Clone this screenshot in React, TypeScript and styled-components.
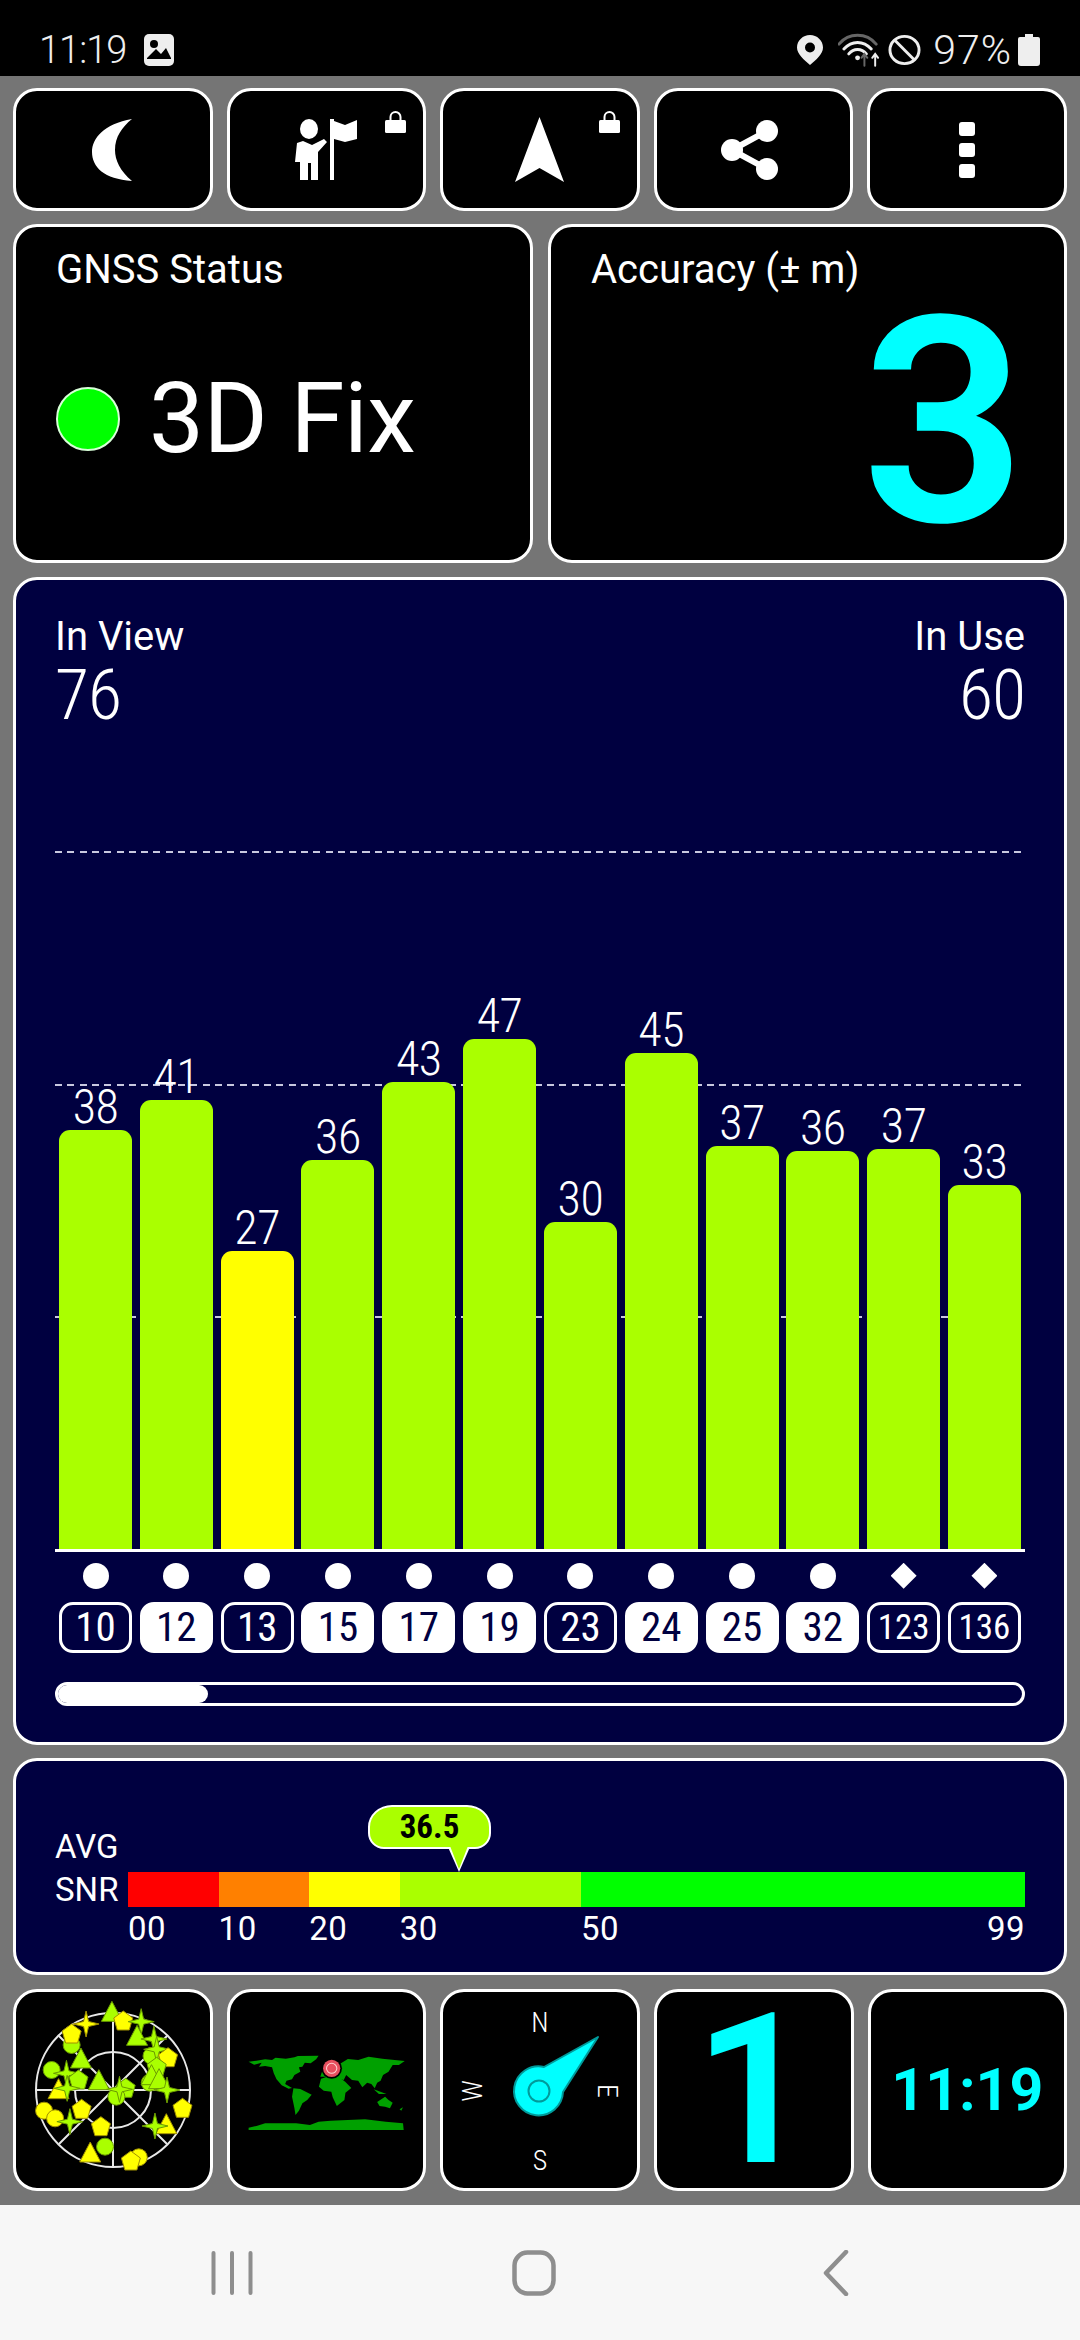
import React from "react";
import styled, { createGlobalStyle } from "styled-components";

const ROBOTO = `"Roboto", "Liberation Sans", sans-serif`;
const LIME = "#aaff00";
const YELLOW = "#ffff00";
const CYAN = "#00ffff";
const NAVY = "#000040";

const GlobalStyle = createGlobalStyle`
  html, body {
    margin: 0;
    padding: 0;
    background: #757575;
  }
  * {
    box-sizing: border-box;
  }
`;

const Screen = styled.div`
  width: 1080px;
  height: 2340px;
  display: flex;
  flex-direction: column;
  background: #757575;
  overflow: hidden;
`;

const StatusBar = styled.div`
  height: 76px;
  flex: none;
  background: #000;
  color: #eee;
  display: flex;
  align-items: center;
  justify-content: space-between;
  padding: 24px 40px 0 39px;
  font-family: ${ROBOTO};
  font-weight: 300;
`;

const StatusGroup = styled.div`
  display: flex;
  align-items: center;
`;

const StatusText = styled.span<{ $size: number; $spacing: number; $left?: number }>`
  font-size: ${(p) => p.$size}px;
  letter-spacing: ${(p) => p.$spacing}px;
  margin-left: ${(p) => p.$left ?? 0}px;
  line-height: 40px;
`;

const StatusIcon = styled.svg<{ $left: number }>`
  margin-left: ${(p) => p.$left}px;
`;

const Main = styled.div`
  flex: 1;
  display: grid;
  grid-template-rows: 123px 339px 1168px 217px 202px;
  row-gap: 13.4px;
  padding: 12px 13px 0;
`;

const ButtonRow = styled.div`
  display: grid;
  grid-template-columns: repeat(5, 1fr);
  column-gap: 14px;
`;

const Tile = styled.div`
  position: relative;
  display: flex;
  align-items: center;
  justify-content: center;
  background: #000;
  border: 3px solid #fff;
  border-radius: 24px;
`;

const TileIcon = styled.svg<{ $shift: number }>`
  margin-right: ${(p) => p.$shift}px;
`;

const LockBadge = styled.svg`
  position: absolute;
  top: 20px;
  right: 17px;
`;

const InfoRow = styled.div`
  display: grid;
  grid-template-columns: 520px 519px;
  column-gap: 15px;
`;

const InfoCard = styled.div`
  position: relative;
  background: #000;
  border: 3px solid #fff;
  border-radius: 24px;
  padding: 20px 38px 0 40px;
  display: flex;
  flex-direction: column;
`;

const CardTitle = styled.div`
  font-family: ${ROBOTO};
  font-stretch: 93%;
  font-size: 40px;
  line-height: 46px;
  color: #fff;
`;

const FixRow = styled.div`
  display: flex;
  align-items: center;
  gap: 29px;
  margin-top: 71px;
`;

const FixDot = styled.div`
  width: 64px;
  height: 64px;
  border-radius: 50%;
  background: #00ff00;
  border: 2px solid #d8ffd8;
`;

const FixText = styled.div`
  font-family: ${ROBOTO};
  font-size: 98px;
  line-height: 110px;
  font-weight: 400;
  letter-spacing: -0.7px;
  color: #fff;
`;

const AccuracyValue = styled.div`
  font-family: ${ROBOTO};
  font-size: 288px;
  font-weight: 600;
  line-height: 260px;
  color: ${CYAN};
  text-align: right;
  margin-top: 0;
`;

const ChartPanel = styled.div`
  background: ${NAVY};
  border: 3px solid #fff;
  border-radius: 24px;
  padding: 34px 39px 36px;
  display: flex;
  flex-direction: column;
`;

const ChartHeader = styled.div`
  display: flex;
  justify-content: space-between;
  color: #fff;
  font-family: ${ROBOTO};
`;

const HeaderBlock = styled.div<{ $right?: boolean }>`
  text-align: ${(p) => (p.$right ? "right" : "left")};
`;

const HeaderLabel = styled.div`
  font-size: 40px;
  font-stretch: 97%;
  line-height: 46px;
`;

const HeaderValue = styled.div`
  font-size: 70px;
  font-weight: 350;
  font-stretch: 75%;
  letter-spacing: -1px;
  line-height: 70px;
`;

const Chart = styled.div`
  position: relative;
  flex: 1;
  display: flex;
  align-items: flex-end;
  gap: 7.8px;
  padding: 0 4px;
  border-bottom: 3px solid #fff;
`;

const GridLine = styled.div<{ $bottom: number }>`
  position: absolute;
  left: 0;
  right: 0;
  bottom: ${(p) => p.$bottom}px;
  height: 2px;
  background: repeating-linear-gradient(to right, #c8c8e0 0 7px, transparent 7px 12.3px);
`;

const BarColumn = styled.div`
  position: relative;
  flex: 1;
  display: flex;
  flex-direction: column;
  align-items: center;
`;

const BarValue = styled.div`
  font-family: ${ROBOTO};
  font-stretch: 75%;
  font-weight: 350;
  letter-spacing: -0.5px;
  font-size: 48px;
  line-height: 46px;
  color: #fff;
`;

const Bar = styled.div<{ $color: string }>`
  width: 100%;
  background: ${(p) => p.$color};
  border-radius: 11px 11px 0 0;
`;

const SlotRow = styled.div`
  display: flex;
  gap: 7.8px;
  padding: 0 4px;
`;

const DotRow = styled(SlotRow)`
  margin-top: 11px;
`;

const ChipRow = styled(SlotRow)`
  margin-top: 13px;
`;

const DotSlot = styled.div`
  flex: 1;
  display: flex;
  justify-content: center;
`;

const Marker = styled.div<{ $diamond: boolean }>`
  width: 26px;
  height: 26px;
  background: #fff;
  border-radius: ${(p) => (p.$diamond ? "0" : "50%")};
  clip-path: ${(p) => (p.$diamond ? "polygon(50% 0, 100% 50%, 50% 100%, 0 50%)" : "none")};
`;

const Chip = styled.div<{ $used: boolean; $small: boolean }>`
  flex: 1;
  height: 51px;
  display: flex;
  align-items: center;
  justify-content: center;
  border: 3px solid #fff;
  border-radius: 14px;
  font-family: ${ROBOTO};
  font-stretch: 75%;
  font-size: ${(p) => (p.$small ? 35 : 41)}px;
  background: ${(p) => (p.$used ? "#fff" : "transparent")};
  color: ${(p) => (p.$used ? NAVY : "#fff")};
`;

const ScrollTrack = styled.div`
  margin-top: 29px;
  height: 24px;
  border: 3px solid #fff;
  border-radius: 12px;
  overflow: hidden;
`;

const ScrollThumb = styled.div`
  width: 150px;
  height: 100%;
  background: #fff;
  border-radius: 0 12px 12px 0;
`;

const SnrPanel = styled.div`
  position: relative;
  background: ${NAVY};
  border: 3px solid #fff;
  border-radius: 24px;
  padding: 70px 39px 0;
  display: grid;
  grid-template-columns: 73px 1fr;
  grid-template-rows: 41px 35px auto;
  color: #fff;
  font-family: ${ROBOTO};
`;

const SnrLabel = styled.div<{ $lift: number }>`
  font-size: 33px;
  line-height: 35px;
  align-self: end;
  margin-bottom: ${(p) => p.$lift}px;
`;

const SnrTrack = styled.div`
  position: relative;
  display: flex;
  height: 35px;
`;

const SnrSegment = styled.div<{ $color: string; $grow: number }>`
  flex: ${(p) => p.$grow} 0 0;
  background: ${(p) => p.$color};
`;

const SnrTicks = styled.div`
  grid-column: 2;
  display: flex;
  margin-top: 4px;
  font-size: 33px;
  letter-spacing: 0.5px;
  line-height: 36px;
`;

const SnrTick = styled.div<{ $grow: number }>`
  flex: ${(p) => p.$grow} 0 0;
  display: flex;
  justify-content: space-between;
`;

const Bubble = styled.div`
  position: absolute;
  left: 240px;
  bottom: 58px;
  width: 123px;
  height: 44px;
  background: ${LIME};
  border: 2px solid #fff;
  border-radius: 24px 24px 16px 16px / 22px 22px 16px 16px;
  color: #000;
  font-size: 33px;
  font-stretch: 85%;
  font-weight: 700;
  line-height: 40px;
  text-align: center;
  &::before {
    content: "";
    position: absolute;
    left: 78px;
    top: 40px;
    border-left: 11px solid transparent;
    border-right: 11px solid transparent;
    border-top: 25px solid #fff;
  }
  &::after {
    content: "";
    position: absolute;
    left: 80px;
    top: 39px;
    border-left: 9px solid transparent;
    border-right: 9px solid transparent;
    border-top: 23px solid ${LIME};
  }
`;

const ClockText = styled.div`
  font-family: ${ROBOTO};
  font-weight: 700;
  font-size: 59px;
  color: ${CYAN};
`;

const BigDigit = styled.div`
  font-family: ${ROBOTO};
  font-weight: 600;
  font-size: 210px;
  line-height: 190px;
  color: ${CYAN};
`;

const NavBar = styled.div`
  height: 135px;
  flex: none;
  background: #f7f7f7;
  display: grid;
  grid-template-columns: repeat(3, 302px);
  align-items: center;
  justify-items: center;
  padding-left: 81px;
`;

const bars = [
  { id: 10, snr: 38, h: 419, used: false, diamond: false },
  { id: 12, snr: 41, h: 449, used: true, diamond: false },
  { id: 13, snr: 27, h: 298, used: false, diamond: false, weak: true },
  { id: 15, snr: 36, h: 389, used: true, diamond: false },
  { id: 17, snr: 43, h: 467, used: true, diamond: false },
  { id: 19, snr: 47, h: 510, used: true, diamond: false },
  { id: 23, snr: 30, h: 327, used: false, diamond: false },
  { id: 24, snr: 45, h: 496, used: true, diamond: false },
  { id: 25, snr: 37, h: 403, used: true, diamond: false },
  { id: 32, snr: 36, h: 398, used: true, diamond: false },
  { id: 123, snr: 37, h: 400, used: false, diamond: true },
  { id: 136, snr: 33, h: 364, used: false, diamond: true }
];

const segments = [
  { color: "#ff0000", grow: 10 },
  { color: "#ff8000", grow: 10 },
  { color: YELLOW, grow: 10 },
  { color: LIME, grow: 20 },
  { color: "#00ff00", grow: 49 }
];

// x, y read off the zoomed crop of the radar tile
type SatKind = "c" | "t" | "s" | "p";
const sats: [SatKind, number, number, string][] = [
  ["t", 325, 160, LIME],
  ["p", 358, 183, YELLOW],
  ["s", 250, 192, YELLOW],
  ["s", 410, 185, LIME],
  ["c", 208, 255, LIME],
  ["p", 208, 222, YELLOW],
  ["t", 398, 232, LIME],
  ["s", 447, 237, LIME],
  ["c", 440, 288, LIME],
  ["s", 455, 268, LIME],
  ["p", 488, 293, YELLOW],
  ["p", 455, 322, LIME],
  ["t", 235, 300, LIME],
  ["c", 150, 330, LIME],
  ["s", 193, 340, LIME],
  ["t", 170, 392, YELLOW],
  ["p", 228, 360, LIME],
  ["t", 287, 365, LIME],
  ["c", 435, 368, LIME],
  ["t", 440, 350, LIME],
  ["t", 462, 362, LIME],
  ["s", 485, 390, LIME],
  ["s", 195, 385, LIME],
  ["p", 365, 385, LIME],
  ["c", 338, 410, LIME],
  ["s", 347, 388, LIME],
  ["p", 237, 448, YELLOW],
  ["c", 128, 452, YELLOW],
  ["c", 160, 475, YELLOW],
  ["s", 203, 485, LIME],
  ["p", 530, 445, YELLOW],
  ["t", 483, 497, YELLOW],
  ["s", 450, 498, LIME],
  ["p", 293, 500, YELLOW],
  ["c", 305, 560, LIME],
  ["t", 262, 582, YELLOW],
  ["c", 403, 592, YELLOW],
  ["p", 380, 603, YELLOW]
];

const polyPoints = (kind: SatKind) => {
  if (kind === "t") return "0,-12 10.5,8 -10.5,8";
  if (kind === "p") return "0,-10 9.5,-3 6,9 -6,9 -9.5,-3";
  return "0,-13 2.5,-2.5 13,0 2.5,2.5 0,13 -2.5,2.5 -13,0 -2.5,-2.5";
};

const Radar = () => (
  <svg width="194" height="196" viewBox="0 0 194 196">
    <g fill="none" stroke="#e8e8e8" strokeWidth="2">
      <circle cx="97" cy="98" r="77" />
      <circle cx="97" cy="98" r="38" />
      <path d="M20 98H174M97 21V175M43 152L151 44M43 44L151 152" />
    </g>
    {sats.map(([kind, zx, zy, color], i) => {
      const x = zx / 2.904 - 16;
      const y = zy / 3 - 32;
      const stroke = color === YELLOW ? "#a09000" : "#6a9a00";
      return kind === "c" ? (
        <circle key={i} cx={x} cy={y} r="8.5" fill={color} stroke={stroke} strokeWidth="1" />
      ) : (
        <polygon
          key={i}
          points={polyPoints(kind)}
          transform={`translate(${x} ${y})`}
          fill={color}
          stroke={stroke}
          strokeWidth="1"
        />
      );
    })}
  </svg>
);

const WorldMap = () => (
  <svg width="193" height="196" viewBox="668 96 560 588" preserveAspectRatio="none">
    <g fill="#00a000">
      <polygon points="722,305 745,302 770,298 790,300 800,293 830,296 855,292 865,288 925,287 918,298 902,310 885,308 878,320 868,322 872,335 855,345 848,358 832,362 828,372 848,384 838,386 818,376 803,358 795,340 790,322 770,318 752,320 760,308 738,314" />
      <polygon points="852,385 872,387 905,404 892,420 878,430 868,452 858,465 855,445 848,410" />
      <polygon points="932,356 950,350 985,352 1003,366 1020,384 1003,398 1000,420 978,438 966,412 962,395 940,392 926,380" />
      <polygon points="930,350 935,335 948,325 990,310 1010,297 1040,300 1070,290 1110,296 1175,303 1158,315 1140,315 1128,335 1112,345 1105,362 1095,368 1088,385 1078,372 1066,368 1052,382 1040,362 1022,360 1005,345 998,360 965,350" />
      <polygon points="1095,426 1118,410 1128,420 1140,428 1132,445 1118,440 1102,438" />
      <polygon points="1085,388 1122,402 1100,402" />
      <polygon points="1160,448 1170,442 1165,452" />
      <polygon points="722,503 745,498 770,490 815,490 860,490 900,495 925,485 960,482 1010,480 1060,478 1120,485 1170,490 1172,510 722,510" />
    </g>
    <ellipse cx="963" cy="325" rx="30" ry="31" fill="#000" />
    <ellipse cx="963" cy="325" rx="25" ry="26" fill="#e8505f" />
    <ellipse cx="963" cy="325" rx="15" ry="15" fill="none" stroke="#ffd0d0" strokeWidth="3" />
  </svg>
);

const CompassLabels = styled.g`
  font-family: ${ROBOTO};
  font-stretch: 75%;
  font-weight: 300;
  font-size: 28px;
  fill: #fff;
  text-anchor: middle;
`;

const Compass = () => (
  <svg width="194" height="196" viewBox="0 0 194 196">
    <CompassLabels>
      <text x="97" y="40">N</text>
      <text x="97" y="178">S</text>
      <text transform="translate(29 99) rotate(-90)" y="10">W</text>
      <text transform="translate(165 99) rotate(90)" y="10">E</text>
    </CompassLabels>
    <path
      d="M155 45L101 75A24.5 24.5 0 1 0 120 100Z"
      fill={CYAN}
      stroke="#009a9a"
      strokeWidth="2"
      strokeLinejoin="round"
    />
    <circle cx="96" cy="99" r="10.5" fill="none" stroke="#009a9a" strokeWidth="2" />
  </svg>
);

const Lock = () => (
  <LockBadge width="21" height="22" viewBox="0 0 21 22">
    <path d="M5.5 10V6a5 5 0 0 1 10 0v4" fill="none" stroke="#fff" strokeWidth="2" />
    <rect x="0" y="9" width="21" height="13" rx="1.5" fill="#fff" />
  </LockBadge>
);

const App = () => (
  <Screen>
    <GlobalStyle />
    <StatusBar>
      <StatusGroup>
        <StatusText $size={38} $spacing={-1}>11:19</StatusText>
        <StatusIcon $left={18} width="30" height="32" viewBox="0 0 30 32">
          <rect width="30" height="32" rx="5" fill="#eee" />
          <circle cx="10" cy="10" r="4" fill="#000" />
          <path d="M3 24L12 15L17 20L22 14L27 24V25H3Z" fill="#000" />
        </StatusIcon>
      </StatusGroup>
      <StatusGroup>
        <StatusIcon $left={0} width="26" height="30" viewBox="0 0 26 30">
          <path
            fillRule="evenodd"
            d="M13 0C6 0 0 5.5 0 12.5C0 19 7 25 13 30C19 25 26 19 26 12.5C26 5.500 20 0 13 0ZM13 7.500A5 5 0 1 1 13 17.500A5 5 0 0 1 13 7.500Z"
            fill="#eee"
          />
        </StatusIcon>
        <StatusIcon $left={15} width="45" height="34" viewBox="0 0 46 34">
          <g fill="none" strokeWidth="3" strokeLinecap="round">
            <path d="M1 11C11 -1 29 -1 39 11" stroke="#666" />
            <path d="M6 16C14 7 26 7 34 16" stroke="#eee" />
            <path d="M11 21C16 15 24 15 29 21" stroke="#eee" />
            <path d="M27 33V21M24 25L27 21L30 25" stroke="#666" strokeWidth="2" />
            <path d="M38 33V21M35 25L38 21L41 25" stroke="#eee" strokeWidth="2" />
          </g>
          <circle cx="20" cy="25" r="2.500" fill="#eee" />
        </StatusIcon>
        <StatusIcon $left={5} width="33" height="32" viewBox="0 0 34 32">
          <ellipse cx="17" cy="16" rx="15" ry="14" fill="none" stroke="#eee" strokeWidth="3" />
          <path d="M7 6L27 26" stroke="#eee" strokeWidth="3" />
        </StatusIcon>
        <StatusText $size={41} $spacing={1} $left={12}>97%</StatusText>
        <StatusIcon $left={6} width="22" height="32" viewBox="0 0 22 32">
          <path d="M7 0H15V3H20A2 2 0 0 1 22 5V29A3 3 0 0 1 19 32H3A3 3 0 0 1 0 29V5A2 2 0 0 1 2 3H7Z" fill="#eee" />
        </StatusIcon>
      </StatusGroup>
    </StatusBar>

    <Main>
      <ButtonRow>
        <Tile>
          <TileIcon $shift={2} width="40" height="62" viewBox="0 0 40 62">
            <path d="M40 0C12 5 0 19 0 33C0 48 12 60 40 62C28 52 23 41 23 31C23 18 30 8 40 0Z" fill="#fff" />
          </TileIcon>
        </Tile>
        <Tile>
          <TileIcon $shift={0} width="62" height="62" viewBox="0 0 62 62">
            <ellipse cx="14" cy="10" rx="9" ry="10" fill="#fff" />
            <path d="M2 24L8 22L17 26L29 20L32 23L23 33V61H16V44H13V61H5V43H0Z" fill="#fff" />
            <rect x="35" y="0" width="4" height="61" fill="#fff" />
            <path d="M39 2L50 6L62 1V20L50 23L39 20Z" fill="#fff" />
          </TileIcon>
          <Lock />
        </Tile>
        <Tile>
          <TileIcon $shift={0} width="49" height="65" viewBox="0 0 49 65">
            <path d="M24.5 0L49 65L24.500 51L0 65Z" fill="#fff" />
          </TileIcon>
          <Lock />
        </Tile>
        <Tile>
          <TileIcon $shift={8} width="57" height="60" viewBox="0 0 57 60">
            <path d="M11 30L46 11M11 30L46 49" stroke="#fff" strokeWidth="6" />
            <circle cx="11" cy="30" r="11" fill="#fff" />
            <circle cx="46" cy="11" r="11" fill="#fff" />
            <circle cx="46" cy="49" r="11" fill="#fff" />
          </TileIcon>
        </Tile>
        <Tile>
          <TileIcon $shift={0} width="16" height="56" viewBox="0 0 16 56">
            <rect y="0" width="16" height="14" rx="3" fill="#fff" />
            <rect y="21" width="16" height="14" rx="3" fill="#fff" />
            <rect y="42" width="16" height="14" rx="3" fill="#fff" />
          </TileIcon>
        </Tile>
      </ButtonRow>

      <InfoRow>
        <InfoCard>
          <CardTitle>GNSS Status</CardTitle>
          <FixRow>
            <FixDot />
            <FixText>3D Fix</FixText>
          </FixRow>
        </InfoCard>
        <InfoCard>
          <CardTitle>Accuracy (± m)</CardTitle>
          <AccuracyValue>3</AccuracyValue>
        </InfoCard>
      </InfoRow>

      <ChartPanel>
        <ChartHeader>
          <HeaderBlock>
            <HeaderLabel>In View</HeaderLabel>
            <HeaderValue>76</HeaderValue>
          </HeaderBlock>
          <HeaderBlock $right>
            <HeaderLabel>In Use</HeaderLabel>
            <HeaderValue>60</HeaderValue>
          </HeaderBlock>
        </ChartHeader>
        <Chart>
          <GridLine $bottom={696} />
          <GridLine $bottom={463} />
          <GridLine $bottom={231} />
          {bars.map((b) => (
            <BarColumn key={b.id}>
              <BarValue>{b.snr}</BarValue>
              <Bar $color={b.weak ? YELLOW : LIME} style={{ height: b.h }} />
            </BarColumn>
          ))}
        </Chart>
        <DotRow>
          {bars.map((b) => (
            <DotSlot key={b.id}>
              <Marker $diamond={b.diamond} />
            </DotSlot>
          ))}
        </DotRow>
        <ChipRow>
          {bars.map((b) => (
            <Chip key={b.id} $used={b.used} $small={b.id > 99}>
              {b.id}
            </Chip>
          ))}
        </ChipRow>
        <ScrollTrack>
          <ScrollThumb />
        </ScrollTrack>
      </ChartPanel>

      <SnrPanel>
        <SnrLabel $lift={8}>AVG</SnrLabel>
        <div />
        <SnrLabel $lift={0}>SNR</SnrLabel>
        <SnrTrack>
          {segments.map((s) => (
            <SnrSegment key={s.color} $color={s.color} $grow={s.grow} />
          ))}
          <Bubble>36.5</Bubble>
        </SnrTrack>
        <SnrTicks>
          <SnrTick $grow={10}>00</SnrTick>
          <SnrTick $grow={10}>10</SnrTick>
          <SnrTick $grow={10}>20</SnrTick>
          <SnrTick $grow={20}>30</SnrTick>
          <SnrTick $grow={49}>
            <span>50</span>
            <span>99</span>
          </SnrTick>
        </SnrTicks>
      </SnrPanel>

      <ButtonRow>
        <Tile>
          <Radar />
        </Tile>
        <Tile>
          <WorldMap />
        </Tile>
        <Tile>
          <Compass />
        </Tile>
        <Tile>
          <BigDigit>1</BigDigit>
        </Tile>
        <Tile>
          <ClockText>11:19</ClockText>
        </Tile>
      </ButtonRow>
    </Main>

    <NavBar>
      <svg width="42" height="44" viewBox="0 0 42 44">
        <path d="M2.500 2V42M21 2V42M39.500 2V42" stroke="#8e8e8e" strokeWidth="4" strokeLinecap="round" />
      </svg>
      <svg width="44" height="46" viewBox="0 0 44 46">
        <rect x="2.500" y="2.500" width="39" height="41" rx="13" fill="none" stroke="#8e8e8e" strokeWidth="4.500" />
      </svg>
      <svg width="26" height="46" viewBox="0 0 26 46">
        <path d="M23 2L3 23L23 44" fill="none" stroke="#8e8e8e" strokeWidth="4.500" strokeLinecap="round" strokeLinejoin="round" />
      </svg>
    </NavBar>
  </Screen>
);

export default App;
